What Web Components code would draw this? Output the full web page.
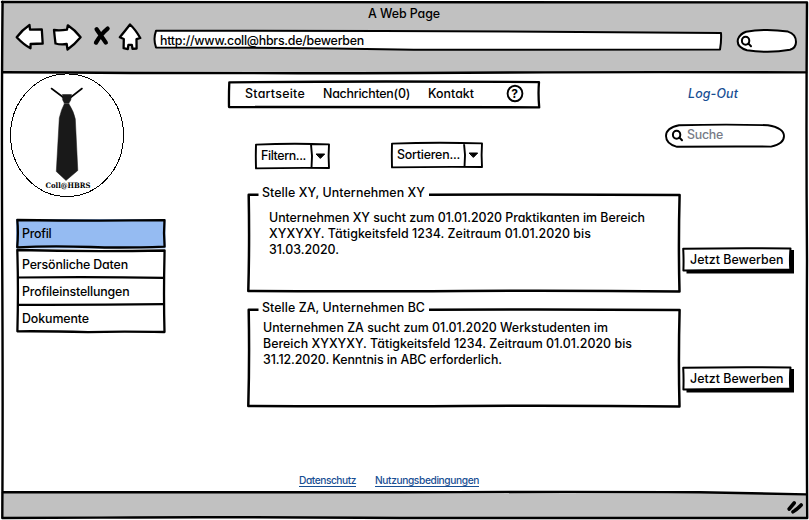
<!DOCTYPE html>
<html lang="de">
<head>
<meta charset="utf-8">
<title>A Web Page</title>
<style>
html,body{margin:0;padding:0;width:809px;height:520px;overflow:hidden;background:#fff}
body{font-family:Inter,"Liberation Sans",sans-serif;font-weight:460;font-feature-settings:"cv11";color:#000}
</style>
</head>
<body>
<web-window></web-window>
<script>
const define = (name, html, setup) => customElements.define(name, class extends HTMLElement {
  connectedCallback() {
    if (this.shadowRoot) return;
    const root = this.attachShadow({ mode: 'open' });
    const t = document.createElement('template');
    t.innerHTML = typeof html === 'function' ? html(this) : html;
    root.append(t.content.cloneNode(true));
    if (setup) setup(this, root);
  }
});
const ink = `svg{display:block;overflow:visible;fill:none;stroke:#000;stroke-linejoin:round;stroke-linecap:round}
.ink{position:absolute;left:0;top:0;z-index:0}
.over{position:relative;z-index:1}`;

/* Text whose tracking is adjusted to a given line width */
define('fit-text', `<style>
:host{display:block;font-size:12.4px;line-height:16px;white-space:pre;flex:none}
span{display:inline-block;vertical-align:top;margin:1px 0 -1px;text-decoration:var(--deco,none);text-underline-offset:1.5px;text-decoration-thickness:1px;text-decoration-skip-ink:none}
</style><span><slot></slot></span>`, (el, root) => {
  const w = parseFloat(el.getAttribute('w')), s = root.querySelector('span');
  const n = el.textContent.length;
  const now = s.getBoundingClientRect().width;
  s.style.letterSpacing = ((w - now) / n).toFixed(4) + 'px';
  el.style.width = w + 'px';
});

define('sketch-lens', `<style>:host{display:block;flex:none}${ink}</style>
<svg width="12" height="12" stroke-width="2"><ellipse cx="4.6" cy="4.8" rx="3.7" ry="4"/><path d="M7.5 7.6L10 10.3"/></svg>`);

define('browser-bar', `<style>
:host{display:flex;flex-direction:column;height:73px;box-sizing:border-box;padding-top:5px;position:relative;background:#c1c1c1;overflow:visible}
${ink}
.title{margin-left:368px}
.row{display:flex;align-items:flex-start;margin-left:15px;margin-top:1px}
.url{position:relative;width:568px;height:22px;margin:8px 0 0 12px}
.url .over{padding:2px 0 0 6px}
.find{position:relative;width:60px;height:24px;margin:7px 0 0 15px}
.find .over{padding:7px 0 0 4px}
</style>
<fit-text class="title" w="72">A Web Page</fit-text>
<div class="row">
<svg width="127" height="30" stroke-width="2.3" fill="#fff">
<g fill="#fff">
<path d="M1.7 15.3Q7 8 14.5 3L15 7.7L26.8 7.5L27.7 21.5L15.6 22L15.5 26.3Q9 23 1.7 15.3Z"/>
<path d="M39 8Q45 8.8 52 7.6L52.8 3.3Q60 8 65.6 15.2Q60 22 52.5 27.5L51.7 22Q46 23 40.5 21.5Q39.7 15 39 8Z"/>
<path d="M104.8 15.3Q110 9 115 2.5Q120 7 125.3 16L121.5 17.2L121.6 26.5L117.5 26.8L116.8 22.8L113.4 22.8L112.8 27.2L108.6 26.2L108.8 17Z"/>
</g>
<path d="M81.6 7.2L90.8 20.6M92.6 6.6Q86 12 81 20.6" stroke-width="4.3"/></svg>
<div class="url"><svg class="ink" width="568" height="22" stroke-width="2"><path fill="#fff" d="M2 .8Q280 .3 567 3Q567.5 11 566 19.6Q420 20.3 260 19.7Q130 17.5 2 17.4Q-1 9 2 .8Z"/></svg><fit-text class="over" w="204">http://www.coll@hbrs.de/bewerben</fit-text></div>
<div class="find"><svg class="ink" width="60" height="24" stroke-width="2"><path fill="#fff" d="M9 2.8Q29-.8 51 2.6Q59 5 59 13Q59 19 53 20.8Q32 24.5 10 21.2Q-1 18 1 10Q3 5 9 2.8Z"/></svg><sketch-lens class="over"></sketch-lens></div>
</div>`);

define('tie-logo', `<style>:host{display:block;width:114px;height:124px}${ink}text{font:bold 7.5px "DejaVu Serif",serif;fill:#000;stroke:none}</style>
<svg width="114" height="124" stroke-width="1"><ellipse cx="57" cy="62.2" rx="56.5" ry="61.3" shape-rendering="crispEdges"/>
<path d="M41.5 15.5L53.5 24.5M72 15.5L60.5 24.5" stroke-width="1.6"/>
<path fill="#191919" stroke="#191919" stroke-width=".5" d="M52.5 21.5H61.5L60.8 27L58.7 30.5Q64 39 65.3 46L67.8 97.5L56 107.5L46.3 98.5L49.3 45Q51 37 54.5 30.5L52.7 27Z"/>
<path d="M54 30.5H59" stroke="#666" stroke-width=".6"/>
<text x="35.5" y="115" textLength="45" lengthAdjust="spacingAndGlyphs">Coll@HBRS</text></svg>`);

define('side-menu', `<style>
:host{display:block;position:relative;width:150px;height:114px}
${ink}
fit-text{padding-left:6px}
.a{padding-top:6px}.b{padding-top:15px}.c{padding-top:11px}
</style>
<svg class="ink" width="150" height="114" stroke-width="2.3">
<path fill="#95bbf2" stroke="none" d="M0 0H149.5V29.5H0Z"/>
<path d="M1.3 1Q75 2 148.5 1.2Q147.5 14 148.6 27.6Q105 29.2 75 28Q35 26.6 1.2 28.3Q2.5 13 1.3 1Z"/>
<path d="M1.3 31Q72 33 148.6 31.5Q147.5 75 148.5 113Q100 112 72 113.2Q34 112 1.4 112.3Q2.5 70 1.3 31Z"/>
<path d="M2 58.5Q75 57.6 148 58.8M2 85.8Q75 86 148 85.2" stroke-width="2.2"/></svg>
<div class="over"><fit-text class="a" w="29.5">Profil</fit-text><fit-text class="b" w="106">Persönliche Daten</fit-text><fit-text class="c" w="107.5">Profileinstellungen</fit-text><fit-text class="c" w="67">Dokumente</fit-text></div>`);

define('top-nav', `<style>
:host{display:block;position:relative;width:312px;height:27px}
${ink}
.over{display:flex;gap:18px;padding:4px 0 0 17px}
.help{margin:-1px 0 0 14px}
.help text{font:bold 12px Inter,sans-serif;fill:#000;stroke:none}
</style>
<svg class="ink" width="312" height="27" stroke-width="2.3"><path d="M1.3 1.3Q150 -.2 311 1.2Q310 13 311.2 26.3Q150 26.5 1 26Q.8 13 1.3 1.3Z"/></svg>
<div class="over"><fit-text w="60">Startseite</fit-text><fit-text w="87">Nachrichten(0)</fit-text><fit-text w="46">Kontakt</fit-text>
<svg class="help" width="18" height="18" stroke-width="1.9"><ellipse cx="9" cy="9.5" rx="7.4" ry="7.8"/><text x="5.2" y="13.6">?</text></svg></div>`);

define('drop-down', el => {
  const w = +el.getAttribute('width'), d = w - 18;
  return `<style>
:host{display:block;position:relative;width:${w}px;height:26px}
${ink}
.over{padding:4px 0 0 6px}
</style>
<svg class="ink" width="${w}" height="26" stroke-width="1.9"><path d="M1 1.6Q${w / 2} 0 ${w - 1} 1.4Q${w - 1.8} 13 ${w - 1} 25Q${w / 2} 24.6 1 25.4Q.6 13 1 1.6ZM${d - 1} 1.4Q${d + .8} 13 ${d - .5} 25"/><path fill="#000" stroke-width="1" d="M${d + 4.5} 11H${d + 12.7}L${d + 8.6} 15.2Z"/></svg>
<fit-text class="over" w="${el.getAttribute('text-width')}">${el.getAttribute('label')}</fit-text>`;
});

define('search-pill', `<style>
:host{display:block;position:relative;width:120px;height:24px}
${ink}
.over{display:flex;padding:2px 0 0 7px;gap:3px;color:#777b86}
sketch-lens{margin-top:4px}
</style>
<svg class="ink" width="120" height="24" stroke-width="1.9"><path d="M14 1.3Q60 0 103 1.2Q119 4 119 12Q119 20 106 22.6Q60 22.3 12 22.8Q1 20 1 12Q1 4 14 1.3Z"/></svg>
<div class="over"><sketch-lens></sketch-lens><fit-text w="36">Suche</fit-text></div>`);

define('job-card', `<style>
:host{display:block;position:relative;width:434px;height:109px;flex:none}
${ink}
.legend{padding-left:15px}
.body{padding:var(--body-pad,9px 0 0 22px)}
</style>
<svg class="ink" width="434" height="109" stroke-width="2.5"><path stroke-linecap="butt" d="M11.5 10.8H1.7Q2.6 60 1.3 107Q90 107.6 216 107Q330 106.4 432.5 107.6Q431.3 60 432.6 11Q300 10 182 10.8"/></svg>
<div class="over"><div class="legend"><slot name="legend"></slot></div><div class="body"><slot></slot></div></div>`);

define('apply-button', `<style>
:host{display:block;position:relative;width:113px;height:27px;flex:none}
${ink}
.over{padding:4px 0 0 8px}
</style>
<svg class="ink" width="113" height="27" stroke-width="2"><path fill="#000" stroke="none" d="M4.5 3H112V26.4H4.5Z"/><path fill="#fff" d="M1.2 1.8Q55 .8 108.5 1.5Q107.5 12 108.3 22.6Q55 22.6 1.4 23.5Q1.8 12 1.2 1.8Z"/></svg>
<fit-text class="over" w="93.5">Jetzt Bewerben</fit-text>`);

define('web-window', `<style>
:host{display:flex;flex-direction:column;position:relative;width:809px;height:520px}
${ink}
main{flex:1;display:grid;grid-template-columns:220px 1fr;min-height:0}
tie-logo{margin-left:10px}
side-menu{margin:22px 0 0 16px}
.col{display:flex;flex-direction:column}
.r1{display:flex;height:49px;padding:8px 0 0 8px;box-sizing:border-box}
.log{margin:4px 0 0 148px;font-style:italic;color:#174e93}
.r2{display:flex;height:62px;align-items:flex-start;padding-left:35px}
.f{margin-top:21px}.s{margin:20px 0 0 61px}.q{margin:2px 0 0 182px}
.post{display:flex;align-items:flex-start;gap:1px;height:115px;padding-left:27px}
.p2{--body-pad:4px 0 0 16px}
.post apply-button{margin-top:63px}
.p2 apply-button{margin-top:67px}
.links{display:flex;gap:19px;padding:59px 0 0 79px;--deco:underline}
.links fit-text{font-size:10.2px;line-height:13px;color:#174e93}
footer{height:28px;background:linear-gradient(#c1c1c1,#c1c1c1) no-repeat 0 0/809px 26px}
</style>
<browser-bar></browser-bar>
<main>
<div class="col"><tie-logo></tie-logo><side-menu></side-menu></div>
<div class="col">
<div class="r1"><top-nav></top-nav><fit-text class="log" w="50">Log-Out</fit-text></div>
<div class="r2"><drop-down class="f" width="75" text-width="45" label="Filtern..."></drop-down><drop-down class="s" width="92" text-width="63" label="Sortieren..."></drop-down><search-pill class="q"></search-pill></div>
<div class="post"><job-card><fit-text slot="legend" w="163">Stelle XY, Unternehmen XY</fit-text><fit-text w="376">Unternehmen XY sucht zum 01.01.2020 Praktikanten im Bereich</fit-text><fit-text w="322">XYXYXY. Tätigkeitsfeld 1234. Zeitraum 01.01.2020 bis</fit-text><fit-text w="70">31.03.2020.</fit-text></job-card><apply-button></apply-button></div>
<div class="post p2"><job-card><fit-text slot="legend" w="163">Stelle ZA, Unternehmen BC</fit-text><fit-text w="345">Unternehmen ZA sucht zum 01.01.2020 Werkstudenten im</fit-text><fit-text w="369">Bereich XYXYXY. Tätigkeitsfeld 1234. Zeitraum 01.01.2020 bis</fit-text><fit-text w="239">31.12.2020. Kenntnis in ABC erforderlich.</fit-text></job-card><apply-button></apply-button></div>
<div class="links"><fit-text w="57">Datenschutz</fit-text><fit-text w="104">Nutzungsbedingungen</fit-text></div>
</div>
</main>
<footer></footer>
<svg class="ink" width="809" height="520" stroke-width="2.4">
<path stroke="#fff" stroke-width="3" stroke-linecap="butt" d="M0 0V520M809 0V520M0 0H809M0 520.5H809"/>
<path fill="#fff" stroke="none" d="M560 490H807V493.8Q720 491.8 560 492Z"/>
<path d="M2 2Q400 1 807 2.4Q806 130 807 260Q806.4 400 807.2 518Q600 518.6 400 518Q200 516.6 100 517.6L2.3 518Q3 400 2.2 260Q1.5 100 2.6 2"/>
<path d="M3 72.2Q220 73.6 420 73Q600 71.6 806 72.4M3 492.2Q200 493 400 492.3Q560 491.5 700 492.2L806 494.4"/>
<path stroke-width="3.6" d="M789.2 509L794.2 503M793 511.8Q797 509.5 801.2 505"/></svg>`);
</script>
</body>
</html>
